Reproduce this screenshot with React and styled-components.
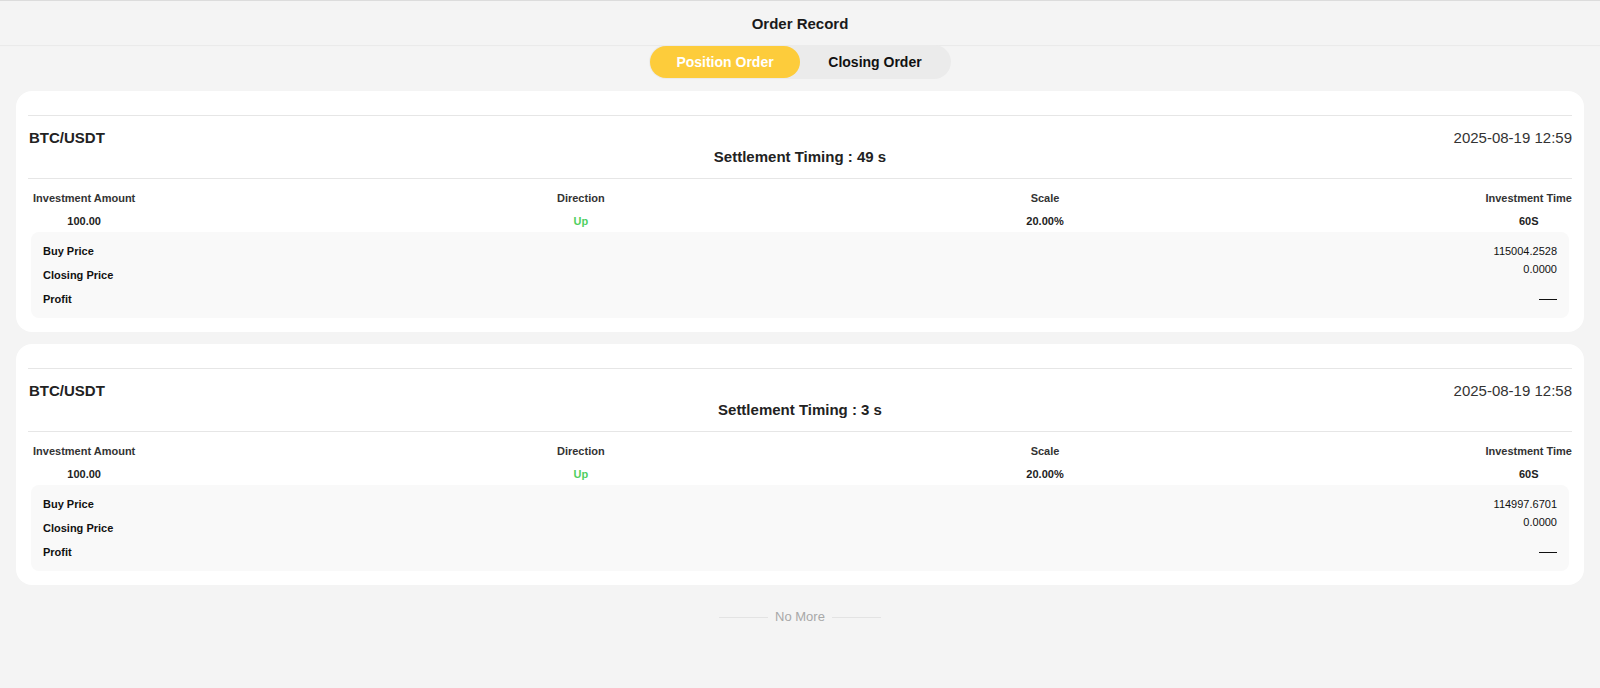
import React from 'react'
import styled, { createGlobalStyle } from 'styled-components'

const GlobalStyle = createGlobalStyle`
  html, body {
    margin: 0;
    padding: 0;
    background: #f4f4f4;
    font-family: 'Liberation Sans', Arial, sans-serif;
    color: #222;
  }
`

const orders = [
  { pair: 'BTC/USDT', time: '2025-08-19 12:59', countdown: 49, amount: '100.00', direction: 'Up', scale: '20.00%', period: '60S', buy: '115004.2528', close: '0.0000' },
  { pair: 'BTC/USDT', time: '2025-08-19 12:58', countdown: 3, amount: '100.00', direction: 'Up', scale: '20.00%', period: '60S', buy: '114997.6701', close: '0.0000' }
]

function OrderCard ({ order }) {
  return (
    <Card>
      <Summary>
        <PairRow>
          <Pair>{order.pair}</Pair>
          <Stamp>{order.time}</Stamp>
        </PairRow>
        <Timing>Settlement Timing : {order.countdown} s</Timing>
      </Summary>
      <Columns>
        <Column>
          <Label>Investment Amount</Label>
          <Value>{order.amount}</Value>
        </Column>
        <Column>
          <Label>Direction</Label>
          <Value up>{order.direction}</Value>
        </Column>
        <Column>
          <Label>Scale</Label>
          <Value>{order.scale}</Value>
        </Column>
        <Column>
          <Label>Investment Time</Label>
          <Value>{order.period}</Value>
        </Column>
      </Columns>
      <PriceBox>
        <PriceLabels>
          <PriceLabel>Buy Price</PriceLabel>
          <PriceLabel>Closing Price</PriceLabel>
          <PriceLabel>Profit</PriceLabel>
        </PriceLabels>
        <PriceValues>
          <PriceValue>{order.buy}</PriceValue>
          <PriceValue>{order.close}</PriceValue>
          <Dash />
        </PriceValues>
      </PriceBox>
    </Card>
  )
}

export default function App () {
  return (
    <Page>
      <GlobalStyle />
      <Header>Order Record</Header>
      <Tabs>
        <Tab active>Position Order</Tab>
        <Tab>Closing Order</Tab>
      </Tabs>
      <List>
        {orders.map((o, i) => <OrderCard key={i} order={o} />)}
      </List>
      <Footer>
        <FooterLine />
        <span>No More</span>
        <FooterLine />
      </Footer>
    </Page>
  )
}

const Page = styled.div`
  min-height: 688px;
  background: #f4f4f4;
`

const Header = styled.div`
  height: 44px;
  border-top: 1px solid #dcdcdc;
  box-shadow: 0 1px 1px rgba(0, 0, 0, 0.04);
  display: flex;
  align-items: center;
  justify-content: center;
  font-size: 15px;
  font-weight: 700;
  color: #1a1a1a;
`

const Tabs = styled.div`
  width: 302px;
  height: 34px;
  margin: 0 auto;
  padding: 1px;
  box-sizing: border-box;
  display: flex;
  background: #ebebeb;
  border-radius: 17px;
`

const Tab = styled.div`
  flex: 1;
  display: flex;
  align-items: center;
  justify-content: center;
  border-radius: 16px;
  font-size: 14px;
  font-weight: 700;
  background: ${p => (p.active ? '#fdcc3b' : 'transparent')};
  color: ${p => (p.active ? '#fff' : '#111')};
`

const List = styled.div`
  padding: 12px 16px 0;
  display: flex;
  flex-direction: column;
  gap: 12px;
`

const Card = styled.div`
  background: #fff;
  border-radius: 16px;
  padding: 24px 12px 14px;
`

const Summary = styled.div`
  border-top: 1px solid #e6e6e6;
  border-bottom: 1px solid #e6e6e6;
  padding: 12px 0 11px;
`

const PairRow = styled.div`
  display: flex;
  justify-content: space-between;
  line-height: 20px;
  padding-left: 1px;
`

const Pair = styled.span`
  font-size: 15px;
  font-weight: 700;
  color: #222;
`

const Stamp = styled.span`
  font-size: 15px;
  color: #333;
`

const Timing = styled.div`
  margin-top: -1px;
  line-height: 20px;
  text-align: center;
  font-size: 15px;
  font-weight: 700;
  color: #222;
`

const Columns = styled.div`
  display: flex;
  justify-content: space-between;
  padding: 11px 0 0 5px;
`

const Column = styled.div`
  display: flex;
  flex-direction: column;
  align-items: center;
`

const Label = styled.span`
  font-size: 11px;
  font-weight: 700;
  line-height: 16px;
  color: #333;
`

const Value = styled.span`
  margin-top: 7px;
  font-size: 11px;
  font-weight: 700;
  line-height: 16px;
  color: ${p => (p.up ? '#4fcf5f' : '#222')};
`

const PriceBox = styled.div`
  margin: 3px 3px 0;
  height: 86px;
  box-sizing: border-box;
  padding: 7px 12px;
  background: #f9f9f9;
  border-radius: 8px;
  display: flex;
  justify-content: space-between;
`

const PriceLabels = styled.div`
  display: flex;
  flex-direction: column;
`

const PriceLabel = styled.span`
  font-size: 11px;
  font-weight: 700;
  line-height: 24px;
  color: #111;
`

const PriceValues = styled.div`
  display: flex;
  flex-direction: column;
  align-items: flex-end;
  padding-top: 3px;
`

const PriceValue = styled.span`
  font-size: 11px;
  line-height: 18px;
  color: #111;
`

const Dash = styled.span`
  display: block;
  width: 18px;
  height: 1px;
  margin-top: 21px;
  background: #111;
`

const Footer = styled.div`
  display: flex;
  align-items: center;
  justify-content: center;
  gap: 7px;
  padding: 23px 0;
  line-height: 18px;
  font-size: 13px;
  color: #a8a8a8;
`

const FooterLine = styled.span`
  width: 49px;
  height: 1px;
  background: #e3e3e3;
`
